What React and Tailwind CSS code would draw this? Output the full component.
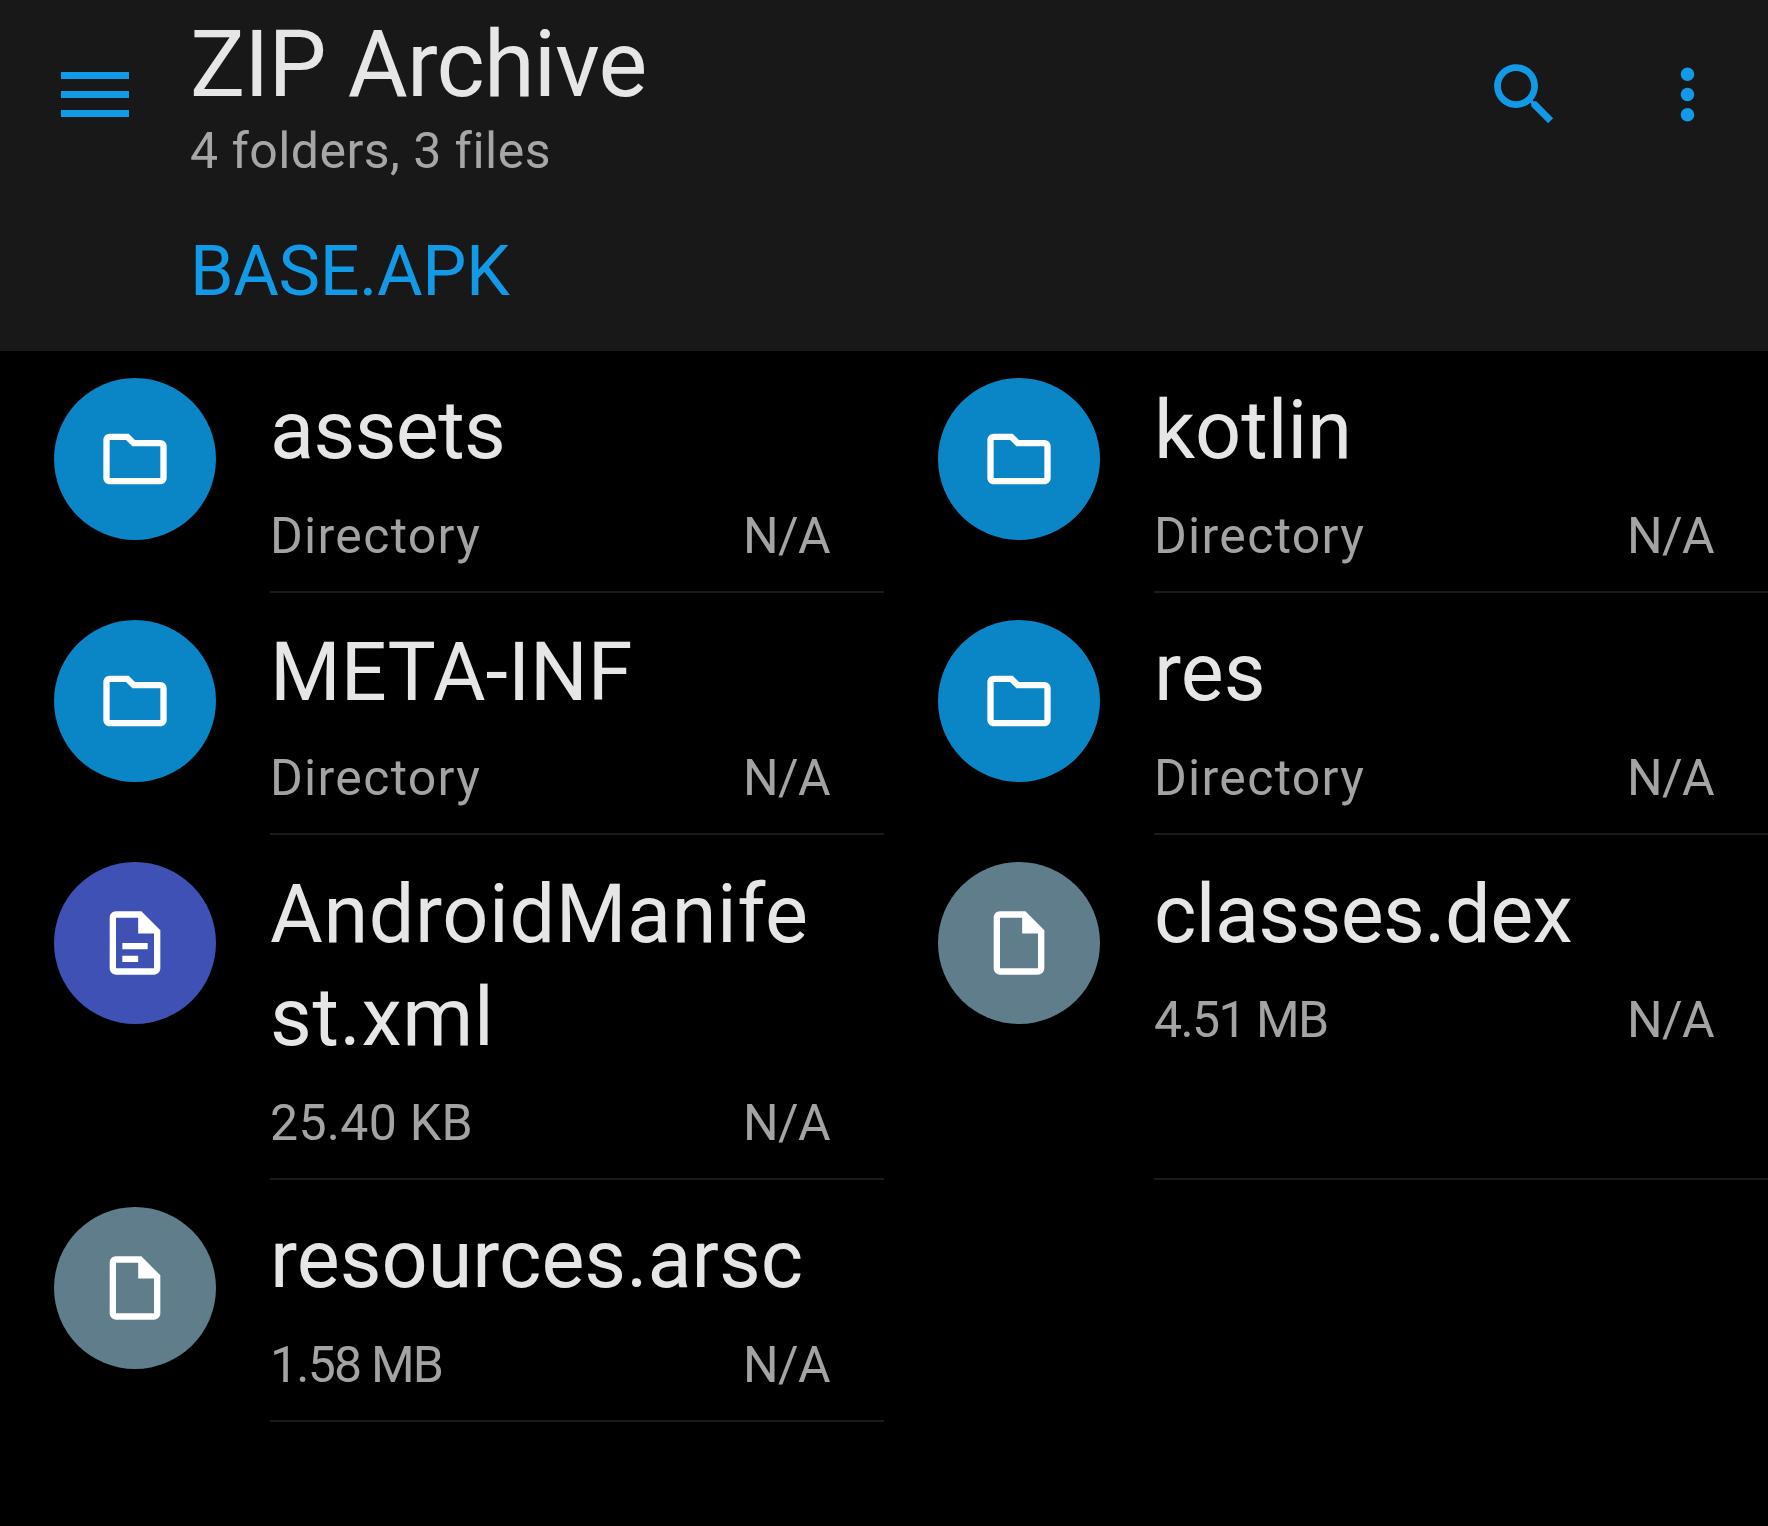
const entries = [
  { name: "assets", size: "Directory", kind: "folder", nameClass: "tracking-[-0.6px]", sizeClass: "tracking-[1.3px]" },
  { name: "kotlin", size: "Directory", kind: "folder", sizeClass: "tracking-[1.3px]" },
  { name: "META-INF", size: "Directory", kind: "folder", sizeClass: "tracking-[1.3px]" },
  { name: "res", size: "Directory", kind: "folder", sizeClass: "tracking-[1.3px]" },
  { name: "AndroidManife\nst.xml", size: "25.40 KB", kind: "doc", nameClass: "tracking-[0.6px]", sizeClass: "tracking-[0.3px]" },
  { name: "classes.dex", size: "4.51 MB", kind: "file", nameClass: "tracking-[-0.6px]", sizeClass: "tracking-[-1.6px]" },
  { name: "resources.arsc", size: "1.58 MB", kind: "file", sizeClass: "tracking-[-1.8px]" },
];

const circleClass = {
  folder: "bg-[#0a85c5]",
  doc: "bg-[#3f51b5]",
  file: "bg-[#607d8b]",
};

const iconPath = {
  folder:
    "M9.17 6l2 2H20v10H4V6h5.17M10 4H4c-1.1 0-1.99.9-1.99 2L2 18c0 1.1.9 2 2 2h16c1.1 0 2-.9 2-2V8c0-1.1-.9-2-2-2h-8l-2-2z",
  doc: "M8 12h8v2H8zm0 4h5v2H8zM14 2H6c-1.1 0-1.99.9-1.99 2L4 20c0 1.1.89 2 1.99 2H18c1.1 0 2-.9 2-2V8l-6-6zM6 20V4h7v5h5v11H6z",
  file: "M14 2H6c-1.1 0-1.99.9-1.99 2L4 20c0 1.1.89 2 1.99 2H18c1.1 0 2-.9 2-2V8l-6-6zM6 20V4h7v5h5v11H6z",
};

function Row({ entry }) {
  return (
    <div className="flex pl-[54px]">
      <div className={`mt-[27px] flex h-[162px] w-[162px] shrink-0 items-center justify-center rounded-full ${circleClass[entry.kind]}`}>
        <svg viewBox="0 0 24 24" className="h-[76px] w-[76px] fill-white">
          <path d={iconPath[entry.kind]} />
        </svg>
      </div>
      <div className="ml-[54px] min-w-0 flex-1 border-b-2 border-[#1a1a1a] pr-[54px] pt-[28px]">
        <div className={`whitespace-pre-line text-[81px] leading-[103px] text-[#e6e6e6] ${entry.nameClass || ""}`}>{entry.name}</div>
        <div className="flex items-center justify-between pb-[1px] text-[50px] leading-[108px] text-[#a3a3a3]">
          <span className={entry.sizeClass}>{entry.size}</span>
          <span className="tracking-[-0.6px]">N/A</span>
        </div>
      </div>
    </div>
  );
}

export default function App() {
  return (
    <div className="min-h-[1526px] bg-black font-['Roboto',sans-serif]">
      <header className="flex h-[351px] bg-[#181818]">
        <div className="flex h-[189px] w-[190px] shrink-0 items-center justify-center">
          <svg viewBox="0 0 68 45" className="h-[45px] w-[68px] fill-[#129ae6]">
            <rect x="0" y="0" width="68" height="7" />
            <rect x="0" y="19" width="68" height="7" />
            <rect x="0" y="38" width="68" height="7" />
          </svg>
        </div>
        <div className="flex-1">
          <div className="pt-[11px] text-[92px] leading-[108px] tracking-[-0.8px] text-[#e6e6e6]">ZIP Archive</div>
          <div className="text-[50px] leading-[64px] tracking-[0.45px] text-[#a6a6a6]">4 folders, 3 files</div>
          <div className="pt-[43px] text-[70px] leading-[90px] tracking-[-0.4px] text-[#129ae6]">BASE.APK</div>
        </div>
        <div className="flex h-[189px] items-center gap-[82px] pr-[40px]">
          <svg viewBox="0 0 24 24" className="h-[81px] w-[81px] fill-[#129ae6]">
            <path d="M15.5 14h-.79l-.28-.27C15.41 12.59 16 11.11 16 9.5 16 5.91 13.09 3 9.5 3S3 5.91 3 9.5 5.91 16 9.5 16c1.61 0 3.09-.59 4.23-1.57l.27.28v.79l5 4.99L20.49 19l-4.99-5zm-6 0C7.01 14 5 11.99 5 9.5S7.01 5 9.5 5 14 7.01 14 9.5 11.99 14 9.5 14z" />
          </svg>
          <svg viewBox="0 0 24 24" className="h-[81px] w-[81px] fill-[#129ae6]">
            <path d="M12 8c1.1 0 2-.9 2-2s-.9-2-2-2-2 .9-2 2 .9 2 2 2zm0 2c-1.1 0-2 .9-2 2s.9 2 2 2 2-.9 2-2-.9-2-2-2zm0 6c-1.1 0-2 .9-2 2s.9 2 2 2 2-.9 2-2-.9-2-2-2z" />
          </svg>
        </div>
      </header>
      <main className="grid grid-cols-2">
        {entries.map((entry) => (
          <Row key={entry.name} entry={entry} />
        ))}
      </main>
    </div>
  );
}
